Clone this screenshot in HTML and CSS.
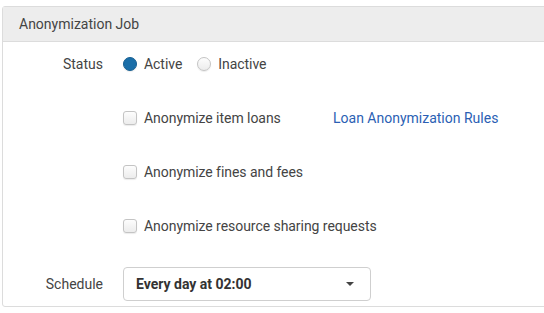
FILE: index.html
```html
<!DOCTYPE html>
<html>
<head>
  <meta charset="utf-8">
  <title>Anonymization Job</title>
  <link rel="stylesheet" href="styles.css">
</head>
<body>
  <div class="panel">
    <div class="panel-head">Anonymization Job</div>
    <div class="panel-body">
      <div class="row">
        <span class="label">Status</span>
        <div class="control">
          <label class="choice"><span class="radio checked"></span>Active</label>
          <label class="choice"><span class="radio"></span>Inactive</label>
        </div>
      </div>
      <div class="row">
        <span class="label"></span>
        <div class="control">
          <label class="choice wide"><span class="box"></span>Anonymize item loans</label>
          <a class="link" href="#">Loan Anonymization Rules</a>
        </div>
      </div>
      <div class="row">
        <span class="label"></span>
        <div class="control">
          <label class="choice"><span class="box"></span>Anonymize fines and fees</label>
        </div>
      </div>
      <div class="row">
        <span class="label"></span>
        <div class="control">
          <label class="choice"><span class="box"></span>Anonymize resource sharing requests</label>
        </div>
      </div>
      <div class="row sched">
        <span class="label">Schedule</span>
        <div class="control">
          <div class="select">
            <span>Every day at 02:00</span>
            <span class="caret"></span>
          </div>
        </div>
      </div>
    </div>
  </div>
</body>
</html>
```
FILE: styles.css
```css
body {
  margin: 0;
  padding: 6px 0 0 2px;
  font-family: Roboto, "Liberation Sans", Arial, sans-serif;
  font-size: 14px;
  color: #444;
  overflow: hidden;
}
.panel {
  width: 560px;
  border: 1px solid #dcdcdc;
  border-radius: 3px;
  background: #fff;
}
.panel-head {
  background: #ededed;
  border-bottom: 1px solid #dcdcdc;
  height: 34px;
  line-height: 34px;
  padding-left: 16px;
  color: #444;
}
.panel-body { padding: 12px 0 5px 0 }
.row {
  display: flex;
  align-items: center;
  height: 20px;
  margin-bottom: 34px;
}
.row.sched { height: 34px; margin: -3px 0 0 0 }
.label {
  width: 100px;
  text-align: right;
  color: #444;
}
.control {
  margin-left: 20px;
  display: flex;
  align-items: center;
}
.choice {
  display: flex;
  align-items: center;
  margin-right: 15px;
  letter-spacing: -0.05px;
}
.choice.wide { width: 210px; margin-right: 0 }
.radio, .box {
  width: 12px;
  height: 12px;
  border: 1px solid #c4c4c4;
  background: linear-gradient(#fdfdfd, #ececec);
  margin-right: 7px;
  box-shadow: 0 1px 1px rgba(0,0,0,0.08);
}
.radio { border-radius: 50% }
.box { border-radius: 3px }
.radio.checked {
  background: #1a6ea8;
  border-color: #175f92;
}
.link {
  color: #2b5fb4;
  text-decoration: none;
}
.select {
  width: 218px;
  height: 32px;
  border: 1px solid #cfcfcf;
  border-radius: 4px;
  display: flex;
  align-items: center;
  justify-content: space-between;
  padding: 0 16px 0 12px;
  font-weight: bold;
  color: #333;
}
.caret {
  width: 0;
  height: 0;
  border-left: 4px solid transparent;
  border-right: 4px solid transparent;
  border-top: 4px solid #444;
}
```
